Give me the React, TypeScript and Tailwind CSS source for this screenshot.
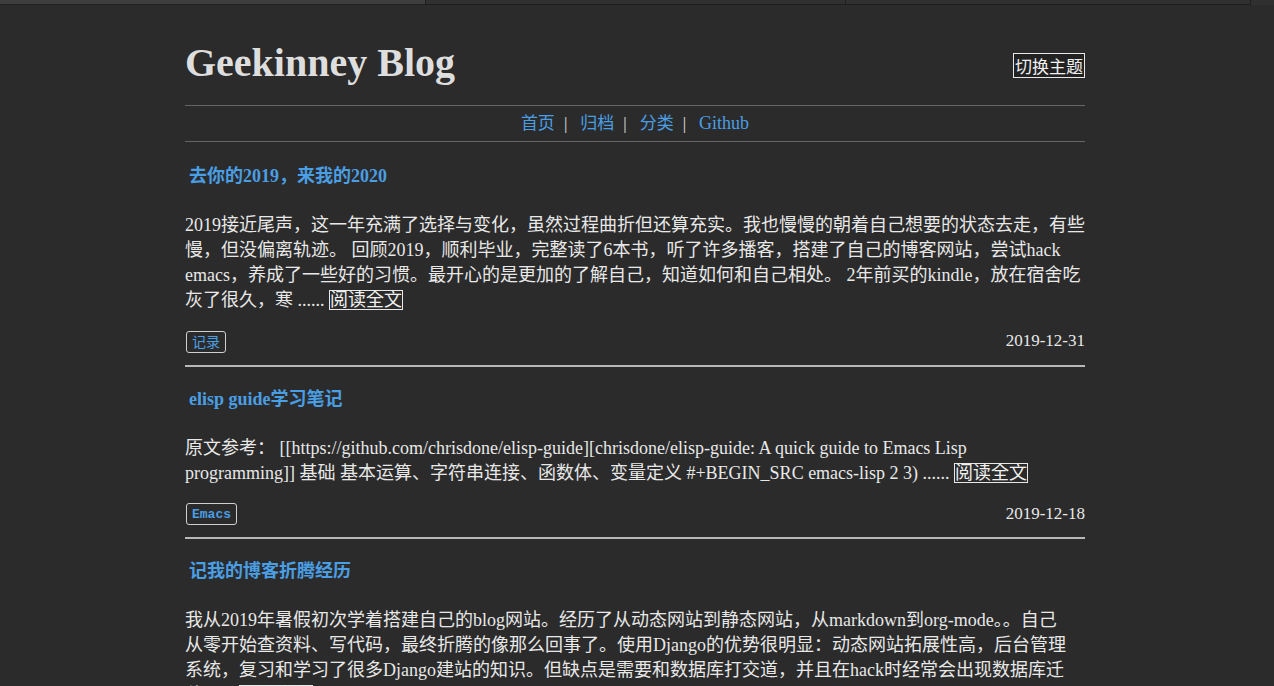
import React from "react";

const serif = { fontFamily: '"Liberation Serif", "Noto Sans CJK SC", serif' } as const;

function ReadMore() {
  return (
    <a className="inline-block border border-[#e8e8e8] leading-[18px] text-[#f0f0f0] align-baseline">阅读全文</a>
  );
}

function Tag({ label, mono }: { label: string; mono?: boolean }) {
  return (
    <span
      className={
        "inline-flex items-center h-[22px] px-[5px] rounded-[3px] border border-[#d0d0d0] text-[#4a9ee3] " +
        (mono ? "text-[13px] font-bold" : "text-[14px]")
      }
      style={mono ? { fontFamily: '"Liberation Mono", monospace' } : { fontFamily: '"Noto Sans CJK SC", sans-serif' }}
    >
      {label}
    </span>
  );
}

function Post({
  title,
  children,
  tag,
  mono,
  date,
  last,
  first,
}: {
  title: string;
  children: React.ReactNode;
  tag?: string;
  mono?: boolean;
  date?: string;
  last?: boolean;
  first?: boolean;
}) {
  return (
    <article className={(last ? "" : "border-b-2 border-[#b8b8b8] ") + (first ? "mt-[2px]" : "")}>
      <h2 className="pt-[20px] pl-[4px] text-[18px] leading-[24px] font-bold text-[#4a9ee3]">{title}</h2>
      <p className="mt-[25px] text-[18px] leading-[25px] text-[#e8e8e8] whitespace-nowrap">{children}</p>
      {tag && (
        <div className="flex items-center justify-between mt-[17px] mb-[11px] pl-[1px]">
          <Tag label={tag} mono={mono} />
          <span className="text-[17px] text-[#e8e8e8] mt-[-2px]">{date}</span>
        </div>
      )}
    </article>
  );
}

function Sep() {
  return <span className="ml-[9px] mr-[13px] text-[#e0e0e0]">|</span>;
}

export default function App() {
  return (
    <div className="min-h-[686px] h-[686px] overflow-hidden bg-[#2b2b2b]" style={serif}>
      <div className="flex h-[5px]">
        <div className="w-[425px] bg-[#3d3d3d] border-b border-[#222]" />
        <div className="w-[420px] bg-[#303030] border-b border-l border-[#1e1e1e]" />
        <div className="w-[405px] bg-[#303030] border-b border-l border-[#1e1e1e]" />
        <div className="flex-1 bg-[#303030] border-l border-[#1e1e1e]" />
      </div>
      <div className="w-[900px] ml-[185px]">
        <header className="flex justify-between items-center pt-[34px] pb-[18px]">
          <h1 className="text-[40px] leading-[48px] font-bold text-[#dedede]">Geekinney Blog</h1>
          <button
            className="mt-[4px] border border-[#e8e8e8] bg-[#222] text-[17px] leading-[23px] px-[1px] text-[#f0f0f0]"
            style={{ fontFamily: '"Noto Sans CJK SC", sans-serif' }}
          >
            切换主题
          </button>
        </header>
        <nav className="h-[37px] border-t border-b border-[#666] flex items-center justify-center text-[17px]">
          <a className="text-[#4a9ee3]">首页</a>
          <Sep />
          <a className="text-[#4a9ee3]">归档</a>
          <Sep />
          <a className="text-[#4a9ee3]">分类</a>
          <Sep />
          <a className="text-[#4a9ee3] text-[18px]">Github</a>
        </nav>

        <Post first title="去你的2019，来我的2020" tag="记录" date="2019-12-31">
          2019接近尾声，这一年充满了选择与变化，虽然过程曲折但还算充实。我也慢慢的朝着自己想要的状态去走，有些
          <br />
          慢，但没偏离轨迹。 回顾2019，顺利毕业，完整读了6本书，听了许多播客，搭建了自己的博客网站，尝试hack
          <br />
          emacs，养成了一些好的习惯。最开心的是更加的了解自己，知道如何和自己相处。 2年前买的kindle，放在宿舍吃
          <br />
          灰了很久，寒 ...... <ReadMore />
        </Post>

        <Post title="elisp guide学习笔记" tag="Emacs" mono date="2019-12-18">
          原文参考： [[https://github.com/chrisdone/elisp-guide][chrisdone/elisp-guide: A quick guide to Emacs Lisp
          <br />
          programming]] 基础 基本运算、字符串连接、函数体、变量定义 #+BEGIN_SRC emacs-lisp 2 3) ...... <ReadMore />
        </Post>

        <Post title="记我的博客折腾经历" last>
          我从2019年暑假初次学着搭建自己的blog网站。经历了从动态网站到静态网站，从markdown到org-mode。。自己
          <br />
          从零开始查资料、写代码，最终折腾的像那么回事了。使用Django的优势很明显：动态网站拓展性高，后台管理
          <br />
          系统，复习和学习了很多Django建站的知识。但缺点是需要和数据库打交道，并且在hack时经常会出现数据库迁
          <br />
          移 ...... <ReadMore />
        </Post>
      </div>
    </div>
  );
}
